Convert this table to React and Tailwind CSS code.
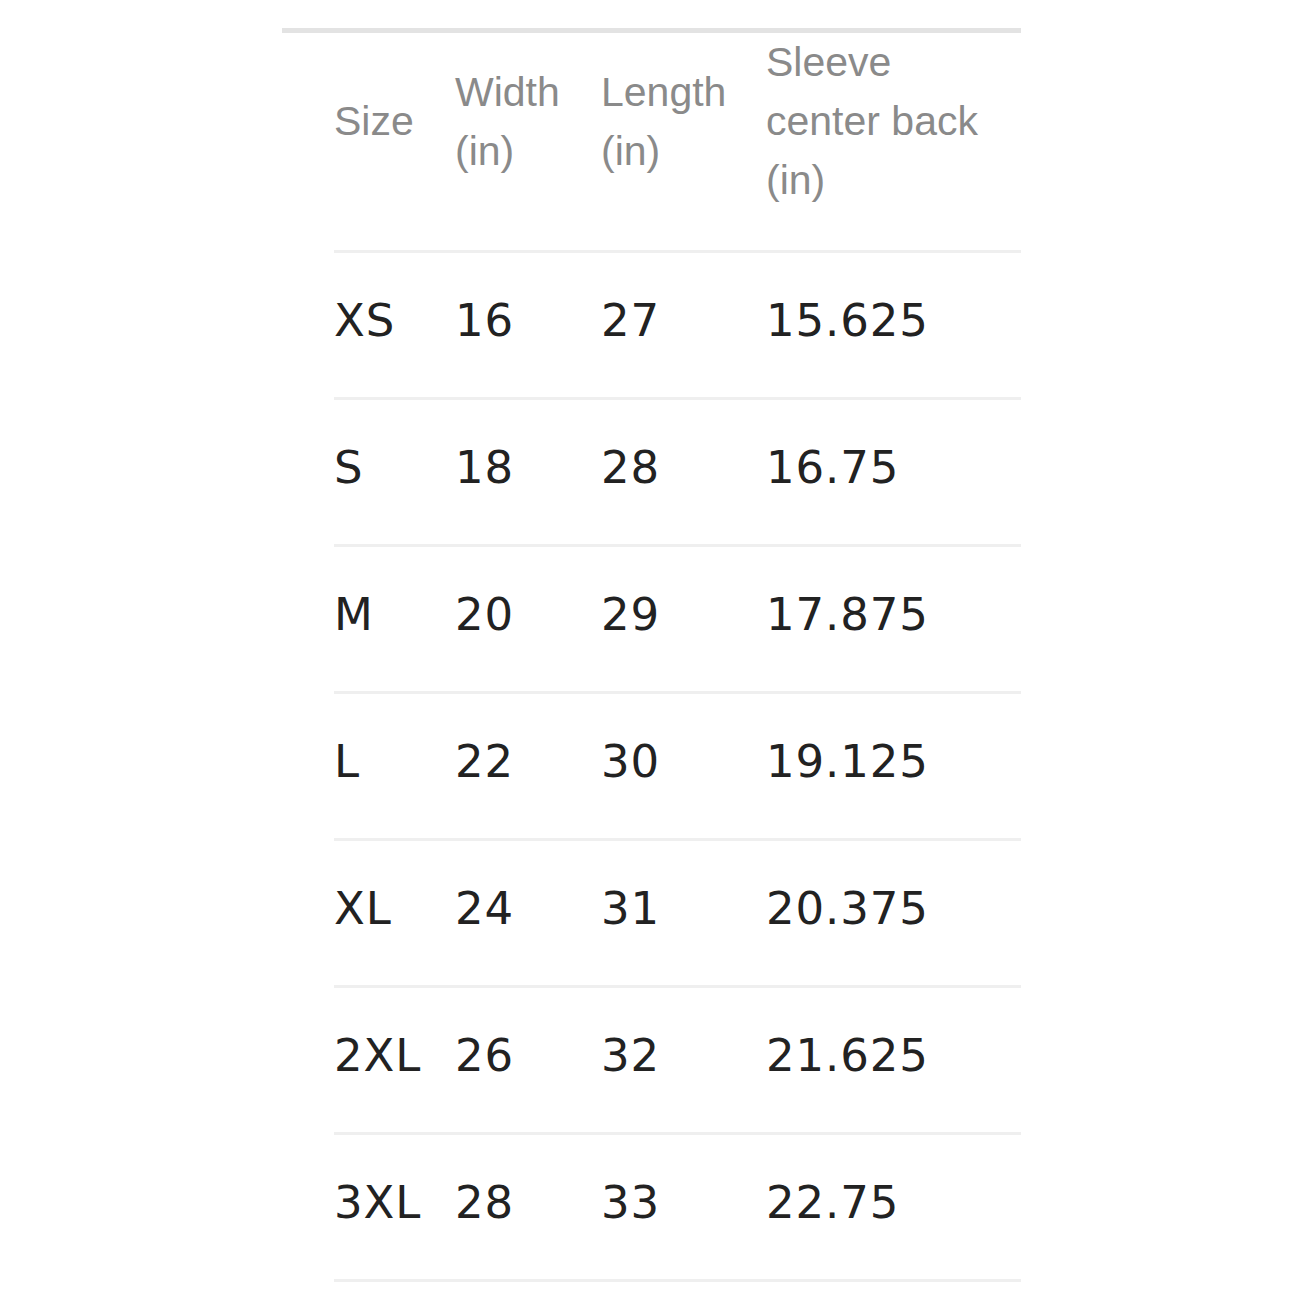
const rows = [
  ["XS", "16", "27", "15.625"],
  ["S", "18", "28", "16.75"],
  ["M", "20", "29", "17.875"],
  ["L", "22", "30", "19.125"],
  ["XL", "24", "31", "20.375"],
  ["2XL", "26", "32", "21.625"],
  ["3XL", "28", "33", "22.75"],
];

const App = () => {
  return (
    <div className="min-h-[1303px] bg-white pt-[28px]">
      <div className="mx-auto w-[739px] border-t-[5px] border-[#e3e3e3] pl-[52px]">
        <table className="w-full table-fixed border-collapse">
          <colgroup>
            <col className="w-[121px]" />
            <col className="w-[146px]" />
            <col className="w-[165px]" />
            <col />
          </colgroup>
          <thead>
            <tr className="border-b-[3px] border-[#efefef] font-['Liberation_Sans',Arial,sans-serif] text-[41px] leading-[59px] text-[#8a8a8a]">
              <th className="p-0 pb-[40px] text-left align-middle font-normal">Size</th>
              <th className="p-0 pb-[40px] text-left align-middle font-normal">
                Width
                <br />
                (in)
              </th>
              <th className="p-0 pb-[40px] text-left align-middle font-normal">
                Length
                <br />
                (in)
              </th>
              <th className="p-0 pb-[40px] text-left align-middle font-normal">
                Sleeve
                <br />
                center back
                <br />
                (in)
              </th>
            </tr>
          </thead>
          <tbody>
            {rows.map((r) => (
              <tr
                key={r[0]}
                className="border-b-[3px] border-[#efefef] font-['DejaVu_Sans',sans-serif] text-[45px] leading-[64px] tracking-[0.02em] text-[#222222]"
              >
                {r.map((c, i) => (
                  <td key={i} className="p-0 pt-[36px] pb-[44px] text-left align-top whitespace-nowrap">
                    {c}
                  </td>
                ))}
              </tr>
            ))}
          </tbody>
        </table>
      </div>
    </div>
  );
};

export default App;
